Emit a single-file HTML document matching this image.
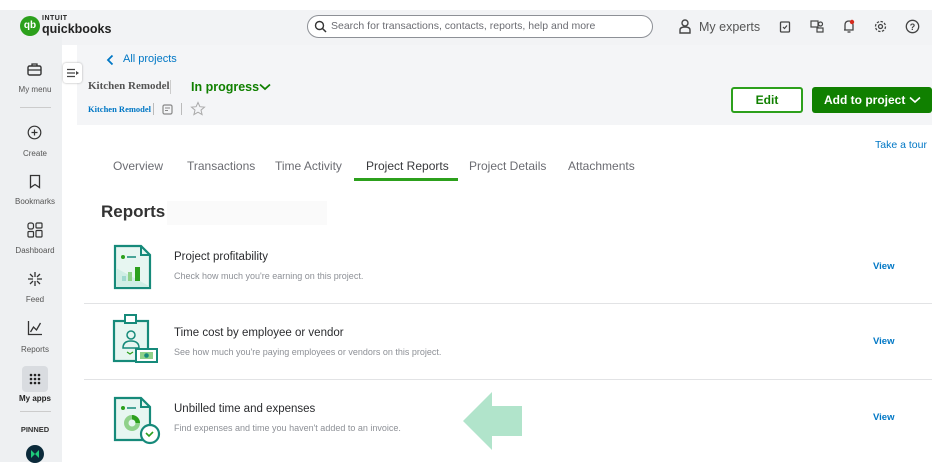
<!DOCTYPE html>
<html><head><meta charset="utf-8"><style>
*{margin:0;padding:0;box-sizing:border-box}
body{width:943px;height:476px;background:#fff;font-family:"Liberation Sans",sans-serif;position:relative;overflow:hidden;color:#393a3d}
.a{position:absolute}
.side{left:0;top:10px;width:62px;height:452px;background:#eef0f2}
.top{left:0;top:10px;width:932px;height:35px;background:#f2f3f5}
.hdr{left:77px;top:45px;width:855px;height:80px;background:#f4f5f7}
.sl{position:absolute;left:0;width:70px;text-align:center;font-size:8px;color:#555}
.tab{position:absolute;top:159px;font-size:12px;color:#6b6c72}
.ttl{font-size:11.5px;color:#2a2b2e}
.sub{font-size:9px;color:#8d9096}
.view{font-size:9.5px;color:#0077c5;font-weight:bold}
.hr{position:absolute;left:84px;width:848px;height:1px;background:#e2e3e5}
</style></head><body>
<div class="a top"></div>
<div class="a side"></div>
<div class="a hdr"></div>
<!-- logo -->
<div class="a" style="left:20px;top:16px;width:20px;height:20px;border-radius:50%;background:#2ca01c;color:#fff;font-size:10px;font-weight:bold;text-align:center;line-height:20px">qb</div>
<div class="a" style="left:42px;top:15px;font-size:7px;font-weight:bold;color:#222;letter-spacing:.5px">INTUIT</div>
<div class="a" style="left:42px;top:22px;font-size:12.5px;font-weight:bold;color:#222">quickbooks</div>
<!-- search -->
<div class="a" style="left:307px;top:15px;width:346px;height:23px;border:1px solid #8d9096;border-radius:12px;background:#fff"></div>
<svg class="a" style="left:314px;top:20px" width="13" height="13" viewBox="0 0 13 13"><circle cx="5.5" cy="5.5" r="4" fill="none" stroke="#333" stroke-width="1.4"/><path d="M8.5 8.5L12 12" stroke="#333" stroke-width="1.5"/></svg>
<div class="a" style="left:331px;top:20px;font-size:10.5px;color:#6b6c72">Search for transactions, contacts, reports, help and more</div>
<!-- top right -->
<svg class="a" style="left:679px;top:19px" width="12" height="15" viewBox="0 0 12 15"><circle cx="6" cy="4" r="3" fill="none" stroke="#444" stroke-width="1.4"/><path d="M1 14V11Q1 8 6 8Q11 8 11 11V14Z" fill="none" stroke="#444" stroke-width="1.4"/></svg>
<div class="a" style="left:699px;top:20px;font-size:12.5px;color:#555">My experts</div>
<svg class="a" style="left:779px;top:20px" width="12" height="13"><rect x="1.5" y="2" width="9" height="10" rx="1" fill="none" stroke="#444" stroke-width="1.3"/><path d="M4 7l1.5 1.5L8 5.5" fill="none" stroke="#444" stroke-width="1.2"/></svg>
<svg class="a" style="left:810px;top:20px" width="14" height="13"><rect x="1" y="1" width="7" height="6" fill="none" stroke="#444" stroke-width="1.2"/><circle cx="10.5" cy="4" r="2" fill="none" stroke="#444" stroke-width="1.2"/><rect x="7" y="8" width="6" height="4" fill="none" stroke="#444" stroke-width="1.2"/></svg>
<svg class="a" style="left:842px;top:19px" width="14" height="15"><path d="M3 11V6Q3 2 7 2Q11 2 11 6V11H2" fill="none" stroke="#444" stroke-width="1.3"/><path d="M5.5 13h3" stroke="#444" stroke-width="1.3"/><circle cx="10" cy="3" r="2.2" fill="#d52b1e"/></svg>
<svg class="a" style="left:874px;top:20px" width="13" height="13"><circle cx="6.5" cy="6.5" r="2" fill="none" stroke="#444" stroke-width="1.3"/><circle cx="6.5" cy="6.5" r="5" fill="none" stroke="#444" stroke-width="1.3" stroke-dasharray="2.5 1.4"/></svg>
<svg class="a" style="left:905px;top:19px" width="15" height="15"><circle cx="7.5" cy="7.5" r="6.2" fill="none" stroke="#444" stroke-width="1.3"/><text x="7.5" y="11" font-size="9" text-anchor="middle" fill="#444" font-family="Liberation Sans" font-weight="bold">?</text></svg>
<!-- sidebar -->
<svg class="a" style="left:27px;top:62px" width="15" height="14"><rect x="1" y="4" width="13" height="9" rx="1.5" fill="none" stroke="#333" stroke-width="1.4"/><path d="M5 4V2h5v2M1 8h13" fill="none" stroke="#333" stroke-width="1.3"/></svg>
<div class="sl" style="top:85px;width:70px">My menu</div>
<div class="a" style="left:20px;top:107px;width:31px;height:1px;background:#ccc"></div>
<svg class="a" style="left:27px;top:125px" width="15" height="15"><circle cx="7.5" cy="7.5" r="6.3" fill="none" stroke="#333" stroke-width="1.2"/><path d="M7.5 4.5v6M4.5 7.5h6" stroke="#333" stroke-width="1.2"/></svg>
<div class="sl" style="top:149px">Create</div>
<svg class="a" style="left:29px;top:174px" width="12" height="15"><path d="M1.5 1.5h9v12l-4.5-3-4.5 3z" fill="none" stroke="#333" stroke-width="1.3"/></svg>
<div class="sl" style="top:197px">Bookmarks</div>
<svg class="a" style="left:27px;top:222px" width="16" height="16"><rect x="1" y="1" width="5.5" height="6" rx="2" fill="none" stroke="#333" stroke-width="1.2"/><rect x="9" y="1" width="6" height="5" rx="1" fill="none" stroke="#333" stroke-width="1.2"/><rect x="1" y="9.5" width="5.5" height="5.5" rx="1" fill="none" stroke="#333" stroke-width="1.2"/><rect x="9" y="8.5" width="6" height="6.5" rx="1" fill="none" stroke="#333" stroke-width="1.2"/></svg>
<div class="sl" style="top:246px">Dashboard</div>
<svg class="a" style="left:27px;top:271px" width="16" height="16"><path d="M8 1v5M8 10v5M1 8h5M10 8h5M3 3l3 3M10 10l3 3M13 3l-3 3M6 10l-3 3" stroke="#333" stroke-width="1.3"/></svg>
<div class="sl" style="top:295px">Feed</div>
<svg class="a" style="left:27px;top:320px" width="16" height="16"><path d="M1.5 1v13.5H15" fill="none" stroke="#333" stroke-width="1.3"/><path d="M3.5 12l3-5 3 3 4-7" fill="none" stroke="#333" stroke-width="1.3"/></svg>
<div class="sl" style="top:345px">Reports</div>
<div class="a" style="left:22px;top:366px;width:26px;height:26px;border-radius:4px;background:#d9dce0"></div>
<svg class="a" style="left:29px;top:373px" width="12" height="12"><g fill="#222"><circle cx="2" cy="2" r="1.3"/><circle cx="6" cy="2" r="1.3"/><circle cx="10" cy="2" r="1.3"/><circle cx="2" cy="6" r="1.3"/><circle cx="6" cy="6" r="1.3"/><circle cx="10" cy="6" r="1.3"/><circle cx="2" cy="10" r="1.3"/><circle cx="6" cy="10" r="1.3"/><circle cx="10" cy="10" r="1.3"/></g></svg>
<div class="sl" style="top:394px;font-weight:bold;color:#222">My apps</div>
<div class="a" style="left:20px;top:411px;width:31px;height:1px;background:#ccc"></div>
<div class="sl" style="top:425px;font-size:7.5px;font-weight:bold;color:#333">PINNED</div>
<div class="a" style="left:26px;top:445px;width:18px;height:18px;border-radius:50%;background:#0b2a3a"></div>
<svg class="a" style="left:30px;top:449px" width="10" height="10"><path d="M1 1l4 4-4 4zM9 1L5 5l4 4z" fill="#1ecb7a"/></svg>
<!-- collapse tab -->
<div class="a" style="left:63px;top:63px;width:19px;height:20px;background:#fff;border-radius:3px;box-shadow:0 0 2px #aaa"></div>
<svg class="a" style="left:66px;top:68px" width="14" height="10"><path d="M1 1.5h8M1 5h8M1 8.5h8" stroke="#444" stroke-width="1.2"/><path d="M10 3l3 2-3 2z" fill="#444"/></svg>
<!-- header -->
<svg class="a" style="left:106px;top:54px" width="8" height="12"><path d="M6.5 1.5L2 6l4.5 4.5" fill="none" stroke="#0077c5" stroke-width="1.8"/></svg>
<div class="a" style="left:123px;top:53px;font-size:11px;color:#0077c5">All projects</div>
<div class="a" style="left:88px;top:80px;font-family:'Liberation Serif',serif;font-size:11px;font-weight:bold;color:#555">Kitchen Remodel</div>
<div class="a" style="left:170px;top:80px;width:1px;height:14px;background:#ccc"></div>
<div class="a" style="left:191px;top:80px;font-size:12.5px;font-weight:bold;color:#108000">In progress</div>
<svg class="a" style="left:259px;top:83px" width="12" height="8"><path d="M1 1.5l5 4.5 5-4.5" fill="none" stroke="#108000" stroke-width="1.8"/></svg>
<div class="a" style="left:88px;top:104px;font-family:'Liberation Serif',serif;font-size:8.5px;font-weight:bold;color:#0077c5">Kitchen Remodel</div>
<div class="a" style="left:153px;top:103px;width:1px;height:12px;background:#bbb"></div>
<svg class="a" style="left:162px;top:104px" width="11" height="11"><rect x="1" y="1" width="9" height="9" rx="1.5" fill="none" stroke="#888" stroke-width="1.2"/><path d="M3 4h5M3 6.5h3" stroke="#888" stroke-width="1.1"/></svg>
<div class="a" style="left:181px;top:103px;width:1px;height:12px;background:#bbb"></div>
<svg class="a" style="left:190px;top:101px" width="16" height="16"><path d="M8 1.5l1.9 4.2 4.6.4-3.5 3 1.1 4.5L8 11.2l-4.1 2.4L5 9.1l-3.5-3 4.6-.4z" fill="none" stroke="#aaa" stroke-width="1"/></svg>
<div class="a" style="left:731px;top:87px;width:72px;height:26px;border:2px solid #2ca01c;border-radius:3px;background:#fff;text-align:center;font-size:12px;font-weight:bold;color:#108000;line-height:22px">Edit</div>
<div class="a" style="left:812px;top:87px;width:120px;height:26px;border-radius:3px;background:#108000;color:#fff;font-size:12px;font-weight:bold;line-height:26px;padding-left:12px">Add to project</div>
<svg class="a" style="left:909px;top:96px" width="12" height="8"><path d="M1 1.5l5 4.5 5-4.5" fill="none" stroke="#fff" stroke-width="1.6"/></svg>
<!-- tabs -->
<div class="a" style="left:875px;top:139px;font-size:10.5px;color:#0077c5">Take a tour</div>
<div class="tab" style="left:113px">Overview</div>
<div class="tab" style="left:187px">Transactions</div>
<div class="tab" style="left:275px">Time Activity</div>
<div class="tab" style="left:366px;color:#393a3d">Project Reports</div>
<div class="a" style="left:354px;top:178px;width:104px;height:3px;background:#2ca01c"></div>
<div class="tab" style="left:469px">Project Details</div>
<div class="tab" style="left:568px">Attachments</div>
<div class="a" style="left:101px;top:202px;font-size:17px;font-weight:bold;color:#333">Reports</div>
<div class="a" style="left:167px;top:201px;width:160px;height:24px;background:#fafafa"></div>
<!-- rows -->
<svg class="a" style="left:113px;top:244px" width="40" height="46"><path d="M2 2h26l9 9v33H2z" fill="#e7f6f1" stroke="#168a7a" stroke-width="2.2"/><path d="M28 2v9h9" fill="none" stroke="#168a7a" stroke-width="2"/><path d="M3 24L36 42V43H3z" fill="#cfeee5"/><circle cx="10" cy="13" r="2" fill="#2ca01c"/><path d="M14 13h9" stroke="#168a7a" stroke-width="1.5"/><rect x="9" y="32" width="4" height="5" fill="#9fd9cf"/><rect x="15" y="28" width="4" height="9" fill="#8fd18a"/><rect x="22" y="23" width="5" height="14" fill="#2ca01c"/></svg>
<div class="a ttl" style="left:174px;top:251px">Project profitability</div>
<div class="a sub" style="left:174px;top:271px">Check how much you're earning on this project.</div>
<div class="a view" style="left:873px;top:261px">View</div>
<div class="hr" style="top:303px"></div>
<svg class="a" style="left:112px;top:313px" width="48" height="52"><rect x="2" y="8" width="34" height="40" fill="#e7f6f1" stroke="#168a7a" stroke-width="2.2"/><rect x="13" y="2" width="11" height="8" fill="#fff" stroke="#168a7a" stroke-width="2"/><circle cx="19" cy="22" r="4" fill="none" stroke="#168a7a" stroke-width="1.5"/><path d="M11 35q0-7 8-7t8 7z" fill="none" stroke="#168a7a" stroke-width="1.5"/><path d="M15 39l3 2 3-2" fill="none" stroke="#2ca01c" stroke-width="1.2"/><rect x="24" y="36" width="21" height="13" fill="#fff" stroke="#168a7a" stroke-width="2"/><rect x="28" y="39" width="13" height="7" fill="#8fd18a"/><circle cx="34.5" cy="42.5" r="2.3" fill="#168a7a"/></svg>
<div class="a ttl" style="left:174px;top:327px">Time cost by employee or vendor</div>
<div class="a sub" style="left:174px;top:347px">See how much you're paying employees or vendors on this project.</div>
<div class="a view" style="left:873px;top:336px">View</div>
<div class="hr" style="top:379px"></div>
<svg class="a" style="left:113px;top:396px" width="48" height="50"><path d="M2 2h26l9 9v33H2z" fill="#e7f6f1" stroke="#168a7a" stroke-width="2.2"/><path d="M28 2v9h9" fill="none" stroke="#168a7a" stroke-width="2"/><circle cx="10" cy="12" r="2" fill="#2ca01c"/><path d="M14 12h9" stroke="#168a7a" stroke-width="1.5"/><circle cx="19" cy="27" r="8" fill="#8fd18a"/><path d="M19 19a8 8 0 0 1 8 8h-8z" fill="#2ca01c"/><circle cx="19" cy="27" r="3.5" fill="#e7f6f1"/><circle cx="37" cy="38" r="9" fill="#fff" stroke="#168a7a" stroke-width="2.2"/><path d="M33 37l3 3 4-4" fill="none" stroke="#2ca01c" stroke-width="1.6"/></svg>
<div class="a ttl" style="left:174px;top:403px">Unbilled time and expenses</div>
<div class="a sub" style="left:174px;top:423px">Find expenses and time you haven't added to an invoice.</div>
<div class="a view" style="left:873px;top:412px">View</div>
<svg class="a" style="left:462px;top:391px" width="62" height="60"><path d="M1 30L30 1V15H60V45H30V59z" fill="#b1e4cb"/></svg>
</body></html>
